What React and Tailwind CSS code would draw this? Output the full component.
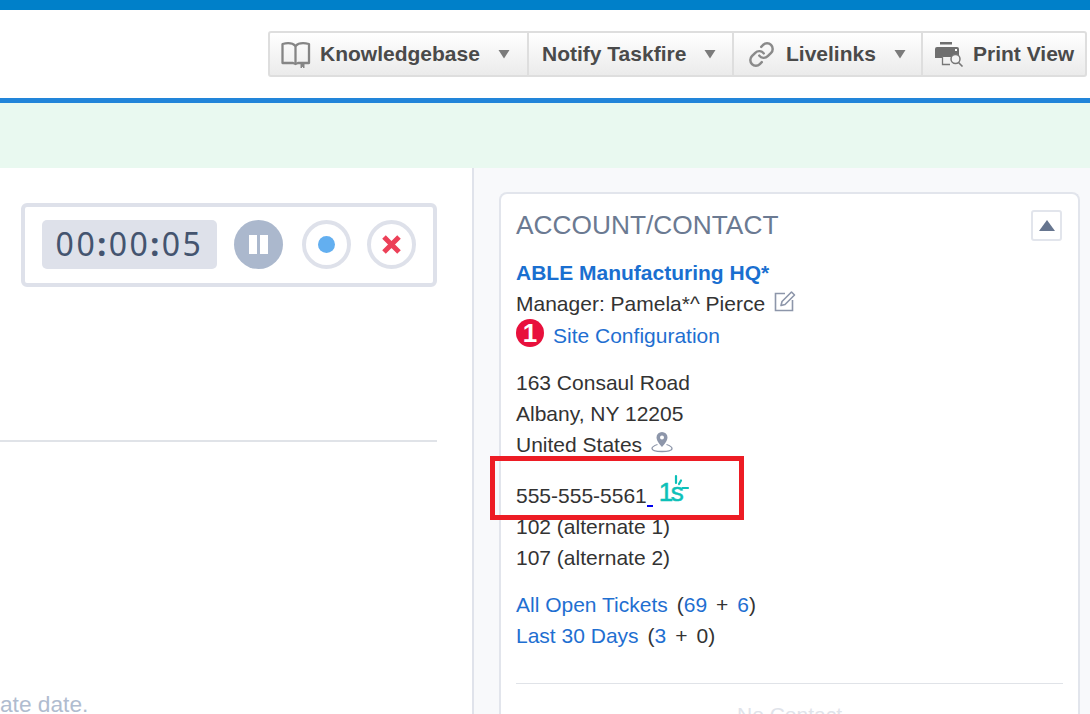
const Caret = () => (
  <svg width="12" height="10" viewBox="0 0 12 10" className="shrink-0"><path d="M0.500 1h11L6 9.500z" fill="#7b7b7b" /></svg>
);

const BookIcon = () => (
  <svg width="30" height="27" viewBox="0 0 30 27" fill="none" stroke="#858585" strokeWidth="2.300" strokeLinejoin="round">
    <path d="M14.500 5C11.500 1.800 6 1.800 1.500 3V22H12L14.500 23L17 22H28V3C23 1.800 17.500 1.800 14.500 5Z" />
    <path d="M14.500 5V22" />
    <path d="M20 23V27L21.500 25.500L23 27V23" fill="#858585" strokeWidth="1" />
  </svg>
);

const LinkIcon = () => (
  <svg width="27" height="27" viewBox="0 0 24 24" fill="none" stroke="#8a8a8a" strokeWidth="2.200" strokeLinecap="round" strokeLinejoin="round">
    <path d="M10 13a5 5 0 0 0 7.540.540l3-3a5 5 0 0 0-7.070-7.070l-1.720 1.710" />
    <path d="M14 11a5 5 0 0 0-7.540-.540l-3 3a5 5 0 0 0 7.070 7.070l1.710-1.710" />
  </svg>
);

const PrintIcon = () => (
  <svg width="29" height="26" viewBox="0 0 29 26">
    <rect x="5" y="1" width="12" height="2.500" fill="#6f6f6f" />
    <path d="M0 8a2 2 0 0 1 2-2h20a2 2 0 0 1 2 2v8H7v1H0z" fill="#6f6f6f" />
    <rect x="20" y="8" width="2" height="2" fill="#fff" />
    <path d="M7.500 15V23.500H15" fill="none" stroke="#777" strokeWidth="1.300" />
    <circle cx="20.500" cy="18" r="4.500" fill="#f4f4f4" stroke="#777" strokeWidth="1.500" />
    <path d="M23.500 21.500l4 4" stroke="#777" strokeWidth="1.600" />
  </svg>
);

const EditIcon = () => (
  <svg width="22" height="22" viewBox="0 0 22 22" fill="none" stroke="#8d96aa" strokeWidth="1.600">
    <path d="M11 3.500H1.500V20.500H18.500V10" />
    <path d="M7 15.500L8 11.500L17.500 2L20.500 5L11 14.500Z" strokeLinejoin="round" />
  </svg>
);

const PinIcon = () => (
  <svg width="22" height="22" viewBox="0 0 22 22">
    <path d="M11 1a5.500 5.500 0 0 0-5.500 5.500C5.500 10.500 11 16 11 16s5.500-5.500 5.500-9.500A5.500 5.500 0 0 0 11 1zm0 7.500a2 2 0 1 1 0-4 2 2 0 0 1 0 4z" fill="#8d96aa" fillRule="evenodd" />
    <path d="M6.500 13.500C3.500 14.500 1 15.500 1 17.500c0 2 4.500 3 10 3s10-1 10-3c0-2-2.500-3-5.500-4" fill="none" stroke="#8d96aa" strokeWidth="1.300" />
  </svg>
);

const ToolButton = ({ icon, label, caret, className }) => (
  <div className={`flex h-full items-center border-r-2 border-[#dedede] last:border-r-0 ${className}`}>
    {icon}
    <span className="font-bold text-[21px] text-[#4a4a4a]">{label}</span>
    {caret && <Caret />}
  </div>
);

export default function App() {
  return (
    <div className="relative flex h-[714px] w-[1090px] flex-col overflow-hidden bg-white font-['Liberation_Sans',Arial,sans-serif]">
      <div className="h-[10px] shrink-0 bg-[#0080c9]"></div>

      {/* Toolbar */}
      <div className="flex h-[88px] shrink-0 items-center justify-end pr-[3px]">
        <div className="flex h-[46px] items-center rounded-[3px] border-2 border-[#dedede] bg-gradient-to-b from-white to-[#ebebeb]">
          <ToolButton icon={<BookIcon />} label="Knowledgebase" caret className="w-[259px] gap-[9px] pl-[11px] [&>svg:last-child]:ml-[9px]" />
          <ToolButton label="Notify Taskfire" caret className="w-[205px] gap-[18px] pl-[13px]" />
          <ToolButton icon={<LinkIcon />} label="Livelinks" caret className="w-[189px] gap-[11px] pl-[14px] [&>svg:last-child]:ml-[7px]" />
          <ToolButton icon={<PrintIcon />} label="Print View" className="w-[162px] gap-[9px] pl-[12px]" />
        </div>
      </div>

      <div className="h-[5px] shrink-0 bg-[#2285d9]"></div>
      <div className="h-[65px] shrink-0 bg-[#e9f9f0]"></div>

      <div className="flex min-h-0 flex-1">
        {/* Left column */}
        <div className="flex w-[474px] shrink-0 flex-col border-r-2 border-[#e0e3eb] bg-white">
          <div className="ml-[21px] mt-[35px] flex h-[84px] w-[416px] shrink-0 items-center gap-[17px] rounded-[6px] border-4 border-[#dee1ea] pb-[2px] pl-[17px]">
            <div className="flex h-[49px] w-[175px] items-center justify-center rounded-[5px] bg-[#dee1ea] font-['Noto_Sans',sans-serif] text-[32px] tracking-[2.500px] text-[#44546f]">
              00<span className="font-bold">:</span>00<span className="font-bold">:</span>05
            </div>
            <div className="flex h-[49px] w-[49px] items-center justify-center gap-[3px] rounded-full bg-[#abb8cd]">
              <span className="h-[19px] w-[8px] bg-white"></span>
              <span className="h-[19px] w-[8px] bg-white"></span>
            </div>
            <div className="ml-[2px] flex h-[49px] w-[49px] items-center justify-center rounded-full border-4 border-[#dee1ea]">
              <span className="h-[17px] w-[17px] rounded-full bg-[#63aff0]"></span>
            </div>
            <div className="-ml-[1px] flex h-[49px] w-[49px] items-center justify-center rounded-full border-4 border-[#dee1ea]">
              <svg width="21" height="21" viewBox="0 0 21 21"><path d="M3 3l15 15M18 3L3 18" stroke="#ec4058" strokeWidth="5" /></svg>
            </div>
          </div>
          <div className="mt-[153px] h-[2px] w-[437px] shrink-0 bg-[#e0e3e8]"></div>
          <div className="mt-[249px] shrink-0 text-[22.700px] leading-[26px] text-[#b0bccf]">ate date.</div>
        </div>

        {/* Right column */}
        <div className="min-w-0 flex-1 bg-[#f8f9fb] pl-[25px] pr-[10px] pt-[24px]">
          <div className="h-[600px] rounded-t-[8px] border-2 border-b-0 border-[#e2e5ec] bg-white px-[15px] pt-[13px] text-[21px] leading-[31px] text-[#333]">
            <div className="flex items-start justify-between">
              <h2 className="text-[26.300px] leading-[36px] text-[#6b7a92]">ACCOUNT/CONTACT</h2>
              <button className="mr-[1px] mt-[3px] flex h-[31px] w-[31px] items-center justify-center rounded-[3px] border-2 border-[#e2e5ec]">
                <svg width="16" height="11" viewBox="0 0 16 11"><path d="M8 0l8 11H0z" fill="#66758f" /></svg>
              </button>
            </div>
            <div className="mt-[14px] font-bold text-[#1a6fd0]">ABLE Manufacturing HQ*</div>
            <div className="flex h-[31px] items-center gap-[9px]">
              <span>Manager: Pamela*^ Pierce</span>
              <span className="mb-[6px]"><EditIcon /></span>
            </div>
            <div className="mt-[1px] flex h-[31px] items-center gap-[9px]">
              <span className="mb-[6px] flex h-[28px] w-[28px] items-center justify-center rounded-full bg-[#e8103c] text-[26px] font-bold leading-none text-white">1</span>
              <a className="text-[#1f6fd1]">Site Configuration</a>
            </div>

            <div className="mt-[16px]">163 Consaul Road</div>
            <div>Albany, NY 12205</div>
            <div className="flex h-[31px] items-center gap-[9px]">
              <span>United States</span>
              <span className="mb-[6px]"><PinIcon /></span>
            </div>

            <div className="mt-[20px] flex h-[31px] items-center">
              <span>555-555-5561</span>
              <span className="mt-[20px] h-[2px] w-[6px] bg-[#0000ee]"></span>
              <span className="relative -mt-[14px] ml-[7px] flex h-[30px] w-[30px]">
                <span className="-ml-[1px] text-[26px] leading-[36px] tracking-[-2.500px] text-[#0cc0b8] [-webkit-text-stroke:0.500px_#0cc0b8]">1s</span>
                <svg className="absolute left-0 top-0" width="30" height="30" viewBox="0 0 30 30" stroke="#0cc0b8" strokeWidth="2.200" strokeLinecap="round">
                  <path d="M16 2V9M21 6.500L19 10M22.500 14H28" />
                </svg>
              </span>
            </div>
            <div>102 (alternate 1)</div>
            <div>107 (alternate 2)</div>

            <div className="mt-[16px]">
              <a className="text-[#1f6fd1]">All Open Tickets</a>
              <span className="ml-[9px]">(<a className="text-[#1f6fd1]">69</a><span className="mx-[9px]">+</span><a className="text-[#1f6fd1]">6</a>)</span>
            </div>
            <div>
              <a className="text-[#1f6fd1]">Last 30 Days</a>
              <span className="ml-[9px]">(<a className="text-[#1f6fd1]">3</a><span className="mx-[9px]">+</span>0)</span>
            </div>

            <div className="mt-[32px] h-[1px] bg-[#e0e3e8]"></div>
            <div className="mt-[15px] text-center text-[#dfe3ea]">No Contact</div>
          </div>
        </div>
      </div>

      {/* Highlight annotation */}
      <div className="pointer-events-none absolute left-[490px] top-[456px] h-[64px] w-[254px] border-[5px] border-[#ed1c24]"></div>
    </div>
  );
}
